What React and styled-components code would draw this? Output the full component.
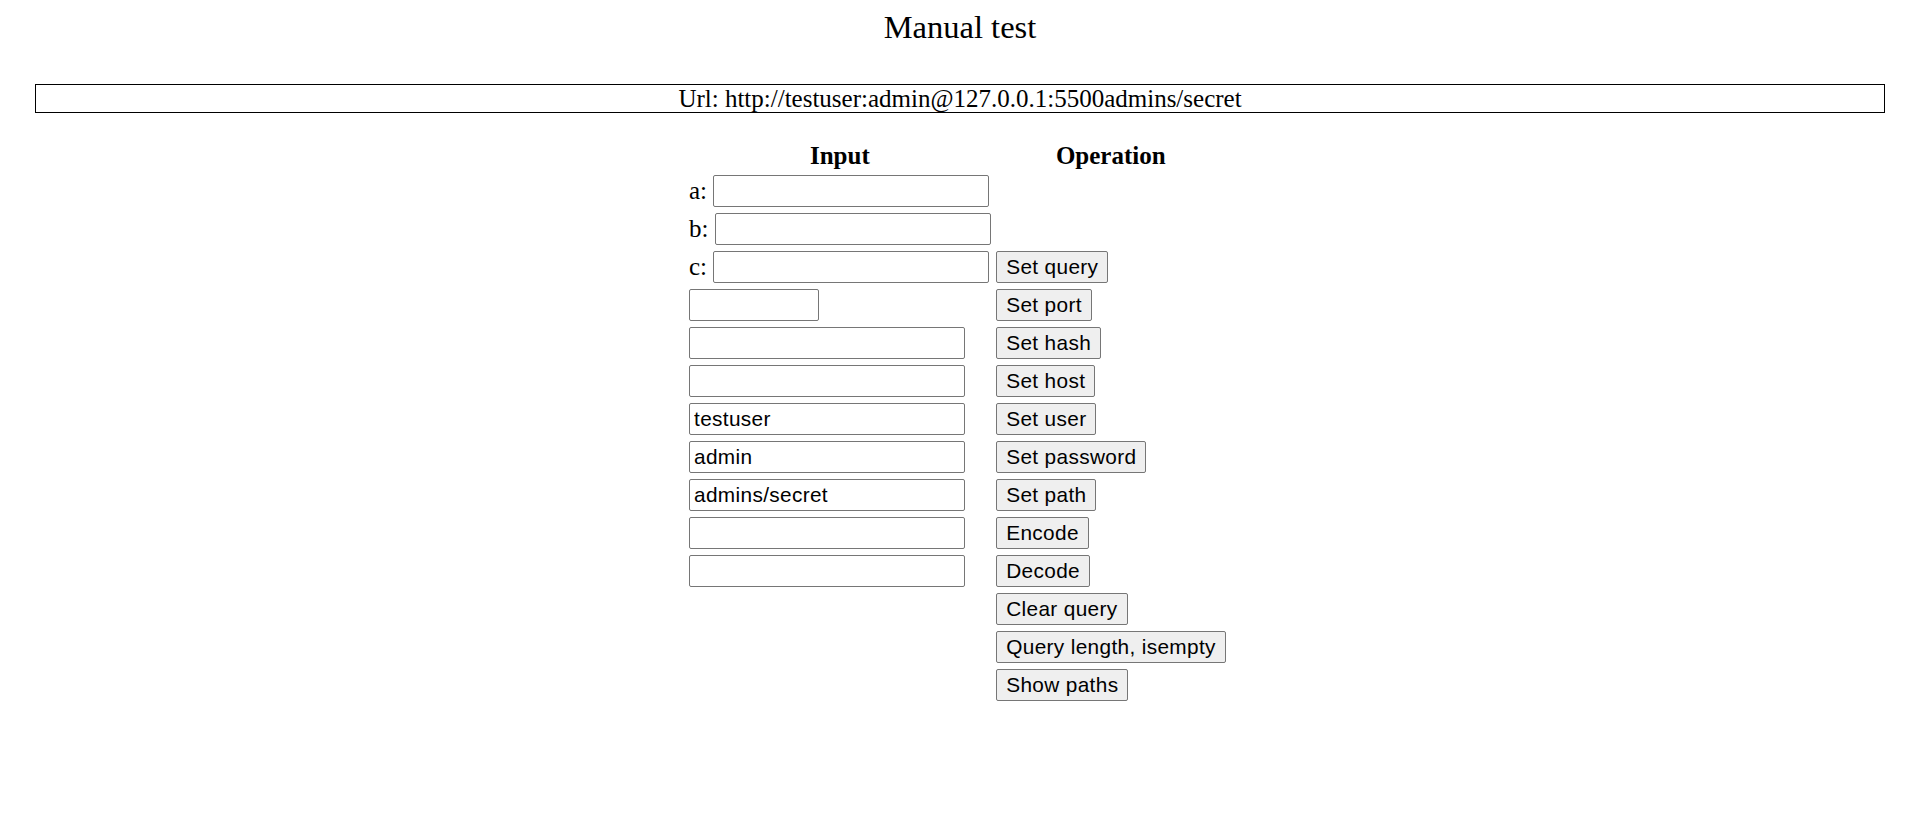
import React from 'react';
import styled, { createGlobalStyle } from 'styled-components';

const GlobalStyle = createGlobalStyle`
  html, body {
    margin: 0;
    padding: 0;
    background: #fff;
  }
  body {
    font-family: "Liberation Serif", "Times New Roman", serif;
    color: #000;
  }
`;

const Page = styled.div`
  padding: 9px 35px 0;
`;

const Title = styled.div`
  font-size: 32.5px;
  line-height: 37px;
  text-align: center;
`;

const UrlBar = styled.div`
  margin-top: 38px;
  border: 1px solid #000;
  font-size: 25px;
  line-height: 27px;
  text-align: center;
`;

const Table = styled.div`
  display: grid;
  grid-template-columns: auto auto;
  grid-template-rows: 27px;
  grid-auto-rows: 32px;
  justify-content: start;
  column-gap: 5px;
  row-gap: 6px;
  margin: 29px 0 0 654px;
`;

const HeadCell = styled.div`
  font-size: 25px;
  font-weight: bold;
  line-height: 27px;
  text-align: center;
`;

const Cell = styled.div`
  display: flex;
  align-items: center;
  font-size: 25px;
  white-space: pre;
`;

const TextInput = styled.input`
  box-sizing: border-box;
  width: ${({ $width }) => $width || 276}px;
  height: 32px;
  margin: 0;
  padding: 0 4px;
  border: 1px solid #767676;
  border-radius: 2px;
  font-family: "Liberation Sans", Arial, sans-serif;
  font-size: 20.8px;
  letter-spacing: 0.35px;
  color: #000;
  background: #fff;
`;

const Button = styled.button`
  box-sizing: border-box;
  height: 32px;
  margin: 0;
  padding: 0 9px 0 9.5px;
  border: 1px solid #767676;
  border-radius: 2px;
  background: #efefef;
  font-family: "Liberation Sans", Arial, sans-serif;
  font-size: 20.8px;
  letter-spacing: 0.35px;
  color: #000;
  white-space: nowrap;
`;

const rows = [
  { label: 'a', op: null },
  { label: 'b', op: null },
  { label: 'c', op: 'Set query' },
  { width: 130, op: 'Set port' },
  { op: 'Set hash' },
  { op: 'Set host' },
  { value: 'testuser', op: 'Set user' },
  { value: 'admin', op: 'Set password' },
  { value: 'admins/secret', op: 'Set path' },
  { op: 'Encode' },
  { op: 'Decode' },
  { noInput: true, op: 'Clear query' },
  { noInput: true, op: 'Query length, isempty' },
  { noInput: true, op: 'Show paths' },
];

const App = () => {
  return (
    <>
      <GlobalStyle />
      <Page>
        <Title>Manual test</Title>
        <UrlBar>Url: http://testuser:admin@127.0.0.1:5500admins/secret</UrlBar>
        <Table>
          <HeadCell>Input</HeadCell>
          <HeadCell>Operation</HeadCell>
          {rows.map((row, i) => (
            <React.Fragment key={i}>
              <Cell>
                {row.label && `${row.label}: `}
                {!row.noInput && (
                  <TextInput $width={row.width} defaultValue={row.value || ''} />
                )}
              </Cell>
              <Cell>{row.op && <Button>{row.op}</Button>}</Cell>
            </React.Fragment>
          ))}
        </Table>
      </Page>
    </>
  );
};

export default App;
